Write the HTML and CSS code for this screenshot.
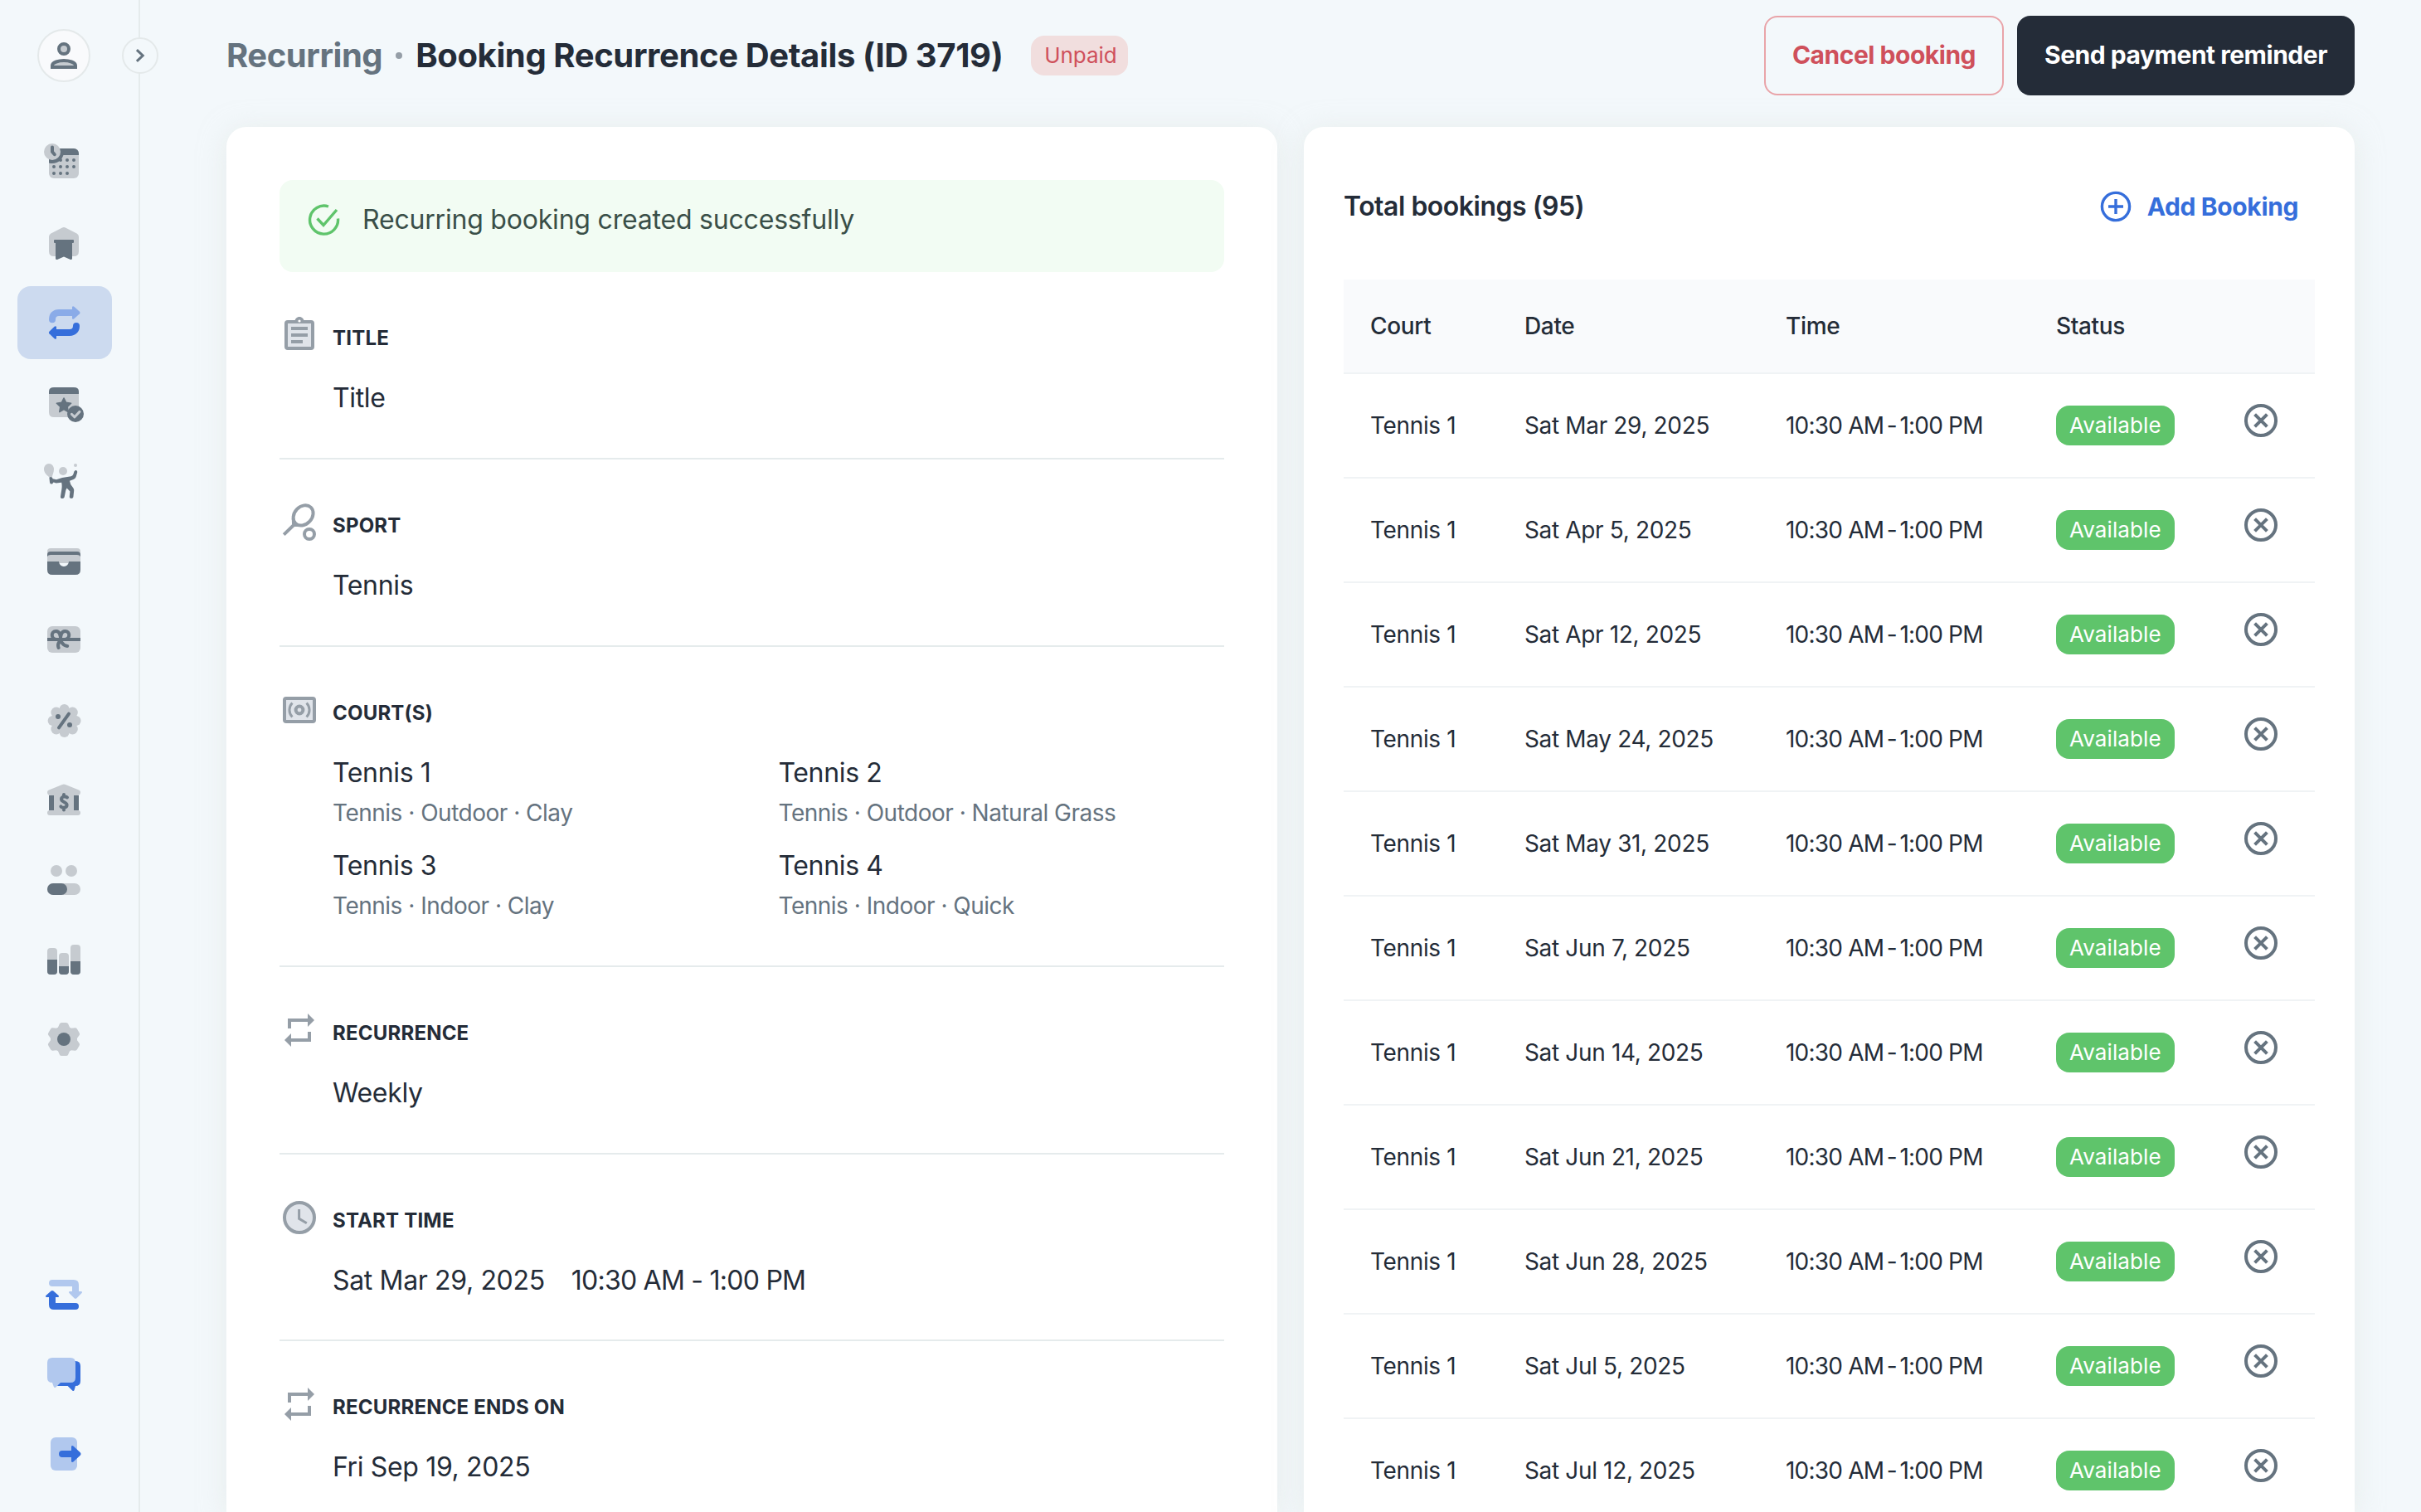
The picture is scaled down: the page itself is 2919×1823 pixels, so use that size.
FILE: index.html
```html
<!DOCTYPE html>
<html lang="en">
<head>
    <meta charset="UTF-8">
    <meta name="viewport" content="width=device-width, initial-scale=1.0">
    <title>Booking Recurrence Details</title>
    <link rel="stylesheet" href="styles.css">
</head>
<body>
    <aside class="sidebar">
        <div class="avatar">
            <svg class="icon" viewBox="0 0 24 24">
                <circle class="soft" cx="12" cy="8" r="3"/>
                <path class="soft" d="M5 19v-1c0-2 4-3 7-3s7 1 7 3v1z"/>
                <circle class="line" cx="12" cy="8" r="3"/>
                <path class="line" d="M5 19v-1c0-2 4-3 7-3s7 1 7 3v1z"/>
            </svg>
        </div>
        <button class="toggle">
            <svg viewBox="0 0 44 44"><path d="M17.5 14.5l8 7.5-8 7.5"/></svg>
        </button>

        <nav class="nav">
            <!-- Calendar -->
            <a class="nav-item">
                <svg class="icon" viewBox="0 0 24 24">
                    <clipPath id="cal"><rect x="3" y="3" width="18" height="18" rx="3"/></clipPath>
                    <g clip-path="url(#cal)">
                        <path class="soft" d="M3 3h18v18H3z"/>
                        <path class="dark" d="M3 3h18v4H3z"/>
                        <circle class="dark" cx="5" cy="5" r="7"/>
                    </g>
                    <circle class="soft" cx="5" cy="5" r="5"/>
                    <path class="line round" d="M5 2.300V5l1.400 1.600"/>
                    <path class="dots" d="M10 10h0M14 10h0M18 10h0M6 14h0M10 14h0M14 14h0M18 14h0M6 18h0M10 18h0M14 18h0"/>
                </svg>
            </a>
            <!-- Club -->
            <a class="nav-item">
                <svg class="icon" viewBox="0 0 24 24">
                    <path class="soft" d="M10.800 2.900q1.200-.8 2.400 0l6.600 3.300q1.200.7 1.200 2V17q0 3-3 3H6q-3 0-3-3V8.200q0-1.300 1.200-2z"/>
                    <path class="dark" d="M6.500 10h11q.5 0 .5.500v1q0 .5-.5.500H17v9.200q0 1-1 .8l-4-1.700L8 22q-1 .2-1-.8V12h-.5q-.5 0-.5-.5v-1q0-.5.5-.5z"/>
                </svg>
            </a>
            <!-- Recurring -->
            <a class="nav-item active">
                <svg class="icon" viewBox="0 0 24 24">
                    <path d="M5 10.100C5 7.500 6.500 6 9 6h8.500" fill="none" stroke="#8aabe8" stroke-width="4" stroke-linecap="round"/>
                    <path d="M17 2.500q.4-.8 1.200-.1l3.300 3q.6.600 0 1.200l-3.300 3q-.8.700-1.200-.1z" fill="#8aabe8"/>
                    <path d="M19.500 14c0 2.400-1.500 4-4 4H7" fill="none" stroke="#356edb" stroke-width="4" stroke-linecap="round"/>
                    <path class="blue" d="M7.500 14.500q-.4-.8-1.200-.1L3.200 17.400q-.6.600 0 1.200l3.100 3q.8.700 1.200-.1z"/>
                </svg>
            </a>
            <!-- Events -->
            <a class="nav-item">
                <svg class="icon" viewBox="0 0 24 24">
                    <path class="soft" d="M3 6h18v12q0 3-3 3H6q-3 0-3-3z"/>
                    <path class="dark" d="M3 7V5.500Q3 3 6 3h12q3 0 3 2.500V7z"/>
                    <path class="dark" d="M12 9.500l1.300 2.700 3 .4-2.200 2.100.5 3.100L12 16.300l-2.600 1.500.5-3.100-2.200-2.100 3-.4z" stroke="#65737f" stroke-width=".8" stroke-linejoin="round"/>
                    <circle class="dark" cx="19" cy="19" r="5"/>
                    <path d="M16.700 19.200l1.800 1.700 3-3.200" fill="none" stroke="#c6cbd0" stroke-width="1.500" stroke-linecap="round" stroke-linejoin="round"/>
                </svg>
            </a>
            <!-- Coaching -->
            <a class="nav-item">
                <svg class="icon" viewBox="0 0 24 24">
                    <path class="soft" d="M3 1C1.200 1 0 2.600 0 4.300 0 6.500 1.700 8 3 9h2c0-1.200 1-2.600 1-4.700C6 2.600 4.800 1 3 1z"/>
                    <circle class="soft" cx="11.500" cy="5.500" r="2.500"/>
                    <circle class="soft" cx="19" cy="2" r="1"/>
                    <path class="dark" d="M3.200 9.200q.8-.5 1.700 0l.4.900 2.200.5 3.500-1.100 5.400-.9q1-.2 1.300-1.200l.5-1.600q.4-1 1.200-.8.900.3.700 1.300l-.8 2.700q-.3 1.100-1.500 1.500l-2.300.9.600 2.100 1.600 2.200q.5.700.4 1.500l-.4 3.900q-.2.900-1.100.9-1.400 0-1.200-1.200l.3-3.100-1.900-1.900q-.7 1-.9 2.600l-.6 2.900q-.2.700-1.100.7-1.400 0-1.200-1.300l.7-4.400q.2-1.300.1-2.500l-.2-1.400-3.300.4-1.500-.6-.8 1q-1.500.4-1.500-.9z"/>
                </svg>
            </a>
            <!-- Wallet -->
            <a class="nav-item">
                <svg class="icon" viewBox="0 0 24 24">
                    <path class="soft" d="M4 4h16q2 0 2 2v7H2V6q0-2 2-2z"/>
                    <path class="dark" d="M2 9V8q0-2 2-2h16q2 0 2 2v1q-.5-1-2-1H4Q2.500 8 2 9z"/>
                    <path class="dark" d="M2 12h7a3 3 0 0 0 6 0h7v5q0 3-3 3H5q-3 0-3-3z"/>
                </svg>
            </a>
            <!-- Gift cards -->
            <a class="nav-item">
                <svg class="icon" viewBox="0 0 24 24">
                    <rect class="soft" x="2" y="3" width="20" height="16" rx="3"/>
                    <path class="dark" d="M2 10h20v2H2z"/>
                    <path class="line round" d="M10 11H7.500C3.800 10.500 4.300 6 7.200 6 9 6 10 7.600 10 11c0-3.400 1-5 2.800-5 2.900 0 3.400 4.500-.3 5zM10 11.500c-1.500 1.500-1.800 3-1.200 4.500M10.500 12.500c.9 1.600 2 2.200 3.600 2.500"/>
                </svg>
            </a>
            <!-- Discounts -->
            <a class="nav-item">
                <svg class="icon" viewBox="0 0 24 24">
                    <g class="soft">
                        <circle cx="12.300" cy="12" r="8"/>
                        <circle cx="12.300" cy="5" r="3"/><circle cx="17.200" cy="7" r="3.200"/>
                        <circle cx="19.300" cy="12" r="3"/><circle cx="17.200" cy="17" r="3.200"/>
                        <circle cx="12.300" cy="19" r="3"/><circle cx="7.400" cy="17" r="3.200"/>
                        <circle cx="5.300" cy="12" r="3"/><circle cx="7.400" cy="7" r="3.200"/>
                    </g>
                    <circle class="dark" cx="8.500" cy="9.500" r="1.500"/>
                    <circle class="dark" cx="15.500" cy="14.500" r="1.500"/>
                    <path class="line round" d="M15 7.800l-6 8.400"/>
                </svg>
            </a>
            <!-- Finances -->
            <a class="nav-item">
                <svg class="icon" viewBox="0 0 24 24">
                    <path class="soft" d="M11 2.500q1-.5 2 0l8 3.200q1 .4 1 1.300 0 2-2 2h-2v9h2.500q1.500 0 1.500 1.500T20.500 21h-17Q2 21 2 19.500T3.500 18H6V9H4Q2 9 2 7q0-.9 1-1.300z"/>
                    <path class="dark" d="M3 9h3v9H3zM18 9h3v9h-3z"/>
                    <path class="line" stroke-linecap="round" d="M14 10.200c-.8-.7-3.500-.7-3.500 1.100 0 1.900 3.300 1.500 3.300 3.500 0 1.900-2.800 1.900-3.600.9M12 8.500v1.200M12 16.500v1.200"/>
                </svg>
            </a>
            <!-- Users -->
            <a class="nav-item">
                <svg class="icon" viewBox="0 0 24 24">
                    <circle class="soft" cx="7.500" cy="6.500" r="3.500"/>
                    <circle class="soft" cx="16.500" cy="6.500" r="3.500"/>
                    <rect class="soft" x="2" y="14" width="20" height="7" rx="3.500"/>
                    <rect class="dark" x="2" y="14" width="12" height="7" rx="3.500"/>
                </svg>
            </a>
            <!-- Reports -->
            <a class="nav-item">
                <svg class="icon" viewBox="0 0 24 24">
                    <rect class="soft" x="2" y="5" width="6" height="16" rx="2"/>
                    <rect class="soft" x="9" y="8" width="6" height="13" rx="2"/>
                    <rect class="soft" x="16" y="3" width="6" height="18" rx="2"/>
                    <path class="dark" d="M2 12h6v7q0 2-2 2H4q-2 0-2-2zM9 16h6v3q0 2-2 2h-2q-2 0-2-2zM16 13h6v6q0 2-2 2h-2q-2 0-2-2z"/>
                </svg>
            </a>
            <!-- Settings -->
            <a class="nav-item">
                <svg class="icon" viewBox="0 0 24 24">
                    <g class="soft">
                        <circle cx="12" cy="12" r="8"/>
                        <path id="cog" d="M10.700 2h2.600q1 0 1.300.8L16 6v12l-1.400 3.200q-.3.800-1.300.8h-2.600q-1 0-1.300-.8L8 18V6l1.400-3.200q.3-.8 1.300-.8z"/>
                        <use href="#cog" transform="rotate(60 12 12)"/>
                        <use href="#cog" transform="rotate(120 12 12)"/>
                    </g>
                    <circle class="dark" cx="12" cy="12" r="4"/>
                </svg>
            </a>
        </nav>

        <nav class="nav nav-bottom">
            <a class="nav-item">
                <svg class="icon" viewBox="0 0 24 24">
                    <path class="sky" d="M5 3h13q3 0 3 3v4h1.300q1.200.2.500 1l-3.100 3.100q-.7.600-1.400 0L15.200 11q-.7-.8.500-1H17V7H5q-2 0-2-2t2-2z"/>
                    <path class="blue" d="M19 21H6q-3 0-3-3v-4.500H1.700q-1.200-.2-.5-1l3.100-2.700q.7-.6 1.400 0l3.100 2.700q.7.800-.5 1H7V17h12q2 0 2 2t-2 2z"/>
                </svg>
            </a>
            <a class="nav-item">
                <svg class="icon" viewBox="0 0 24 24">
                    <path class="blue" d="M8 19l3-8 5-7h3q3 0 3 3v9q0 3-3 3l-.7 2.500q-.4.900-1.200.2L14.300 19z"/>
                    <path class="sky" d="M5 2h11q3 0 3 3v9q0 3-3 3h-6l-2.800 2.700q-.9.700-1.300-.2L5 17q-3 0-3-3V5q0-3 3-3z"/>
                </svg>
            </a>
            <a class="nav-item">
                <svg class="icon" viewBox="0 0 24 24">
                    <rect class="sky" x="4" y="2" width="16" height="20" rx="3"/>
                    <path class="blue" d="M11 10h5.500V7.600q.2-1 1.200-.4l4.300 4.100q.6.700 0 1.400l-4.300 4.100q-1 .6-1.200-.4V14H11q-2 0-2-2t2-2z"/>
                </svg>
            </a>
        </nav>
    </aside>

    <main class="main">
        <header class="header">
            <h1 class="title"><span class="crumb">Recurring</span><span class="sep"></span>Booking Recurrence Details (ID 3719)</h1>
            <span class="badge badge-unpaid">Unpaid</span>
            <div class="actions">
                <button class="btn btn-cancel">Cancel booking</button>
                <button class="btn btn-dark">Send payment reminder</button>
            </div>
        </header>

        <div class="columns">
            <section class="card details">
                <div class="alert">
                    <svg class="alert-icon" viewBox="0 0 40 40">
                        <path d="M25 4A17 17 0 1 0 36.500 18.500"/>
                        <path d="M11.500 18.500l7.500 8L35 8"/>
                    </svg>
                    Recurring booking created successfully
                </div>

                <div class="detail">
                    <svg class="icon" viewBox="0 0 24 24">
                        <path class="fill" d="M4 4h16v16H4z"/>
                        <rect class="stroke" x="4" y="4" width="16" height="16" rx="1"/>
                        <path class="solid" d="M9 4c.3-1.700 1.400-3 3-3s2.700 1.300 3 3z"/>
                        <circle cx="12" cy="3.500" r=".8" fill="#fff"/>
                        <path class="solid" d="M7 7h10v2H7zM7 11h10v2H7zM7 15h7v2H7z"/>
                    </svg>
                    <div class="detail-body">
                        <h2>TITLE</h2>
                        <p>Title</p>
                    </div>
                </div>

                <div class="detail">
                    <svg class="icon" viewBox="0 0 24 24">
                        <ellipse class="stroke" cx="14.300" cy="7.700" rx="6.700" ry="5.300" transform="rotate(-47 14.300 7.700)"/>
                        <path class="stroke" d="M2.600 19.300L9.500 12.600"/>
                        <path class="solid" d="M7.400 9.500l5.300 5-3.500 0-1.700-1.500z"/>
                        <circle class="stroke" cx="18" cy="19" r="3"/>
                    </svg>
                    <div class="detail-body">
                        <h2>SPORT</h2>
                        <p>Tennis</p>
                    </div>
                </div>

                <div class="detail">
                    <svg class="icon" viewBox="0 0 24 24">
                        <path class="fill" d="M3 5h18v14H3z"/>
                        <rect class="stroke" x="3" y="5" width="18" height="14" rx="1"/>
                        <circle class="stroke" cx="12" cy="12" r="2.200"/>
                        <path class="thin" d="M7.700 7.700c-2.300 2.500-2.300 6.100 0 8.600M16.300 7.700c2.300 2.500 2.300 6.100 0 8.600"/>
                    </svg>
                    <div class="detail-body">
                        <h2>COURT(S)</h2>
                        <div class="courts">
                            <div><p>Tennis 1</p><small>Tennis · Outdoor · Clay</small></div>
                            <div><p>Tennis 2</p><small>Tennis · Outdoor · Natural Grass</small></div>
                            <div><p>Tennis 3</p><small>Tennis · Indoor · Clay</small></div>
                            <div><p>Tennis 4</p><small>Tennis · Indoor · Quick</small></div>
                        </div>
                    </div>
                </div>

                <div class="detail">
                    <svg class="icon" viewBox="0 0 24 24"><path id="repeat" class="solid" d="M7 7h10v3l4-4-4-4v3H5v6h2V7zm10 10H7v-3l-4 4 4 4v-3h12v-6h-2v4z"/></svg>
                    <div class="detail-body">
                        <h2>RECURRENCE</h2>
                        <p>Weekly</p>
                    </div>
                </div>

                <div class="detail detail-time">
                    <svg class="icon" viewBox="0 0 24 24">
                        <circle class="fill" cx="12" cy="12" r="9"/>
                        <circle class="stroke" cx="12" cy="12" r="9"/>
                        <path class="thin" d="M11.800 7v5.700l4.600 2.700"/>
                    </svg>
                    <div class="detail-body">
                        <h2>START TIME</h2>
                        <p><span class="date">Sat Mar 29, 2025</span><span class="hours">10:30 AM - 1:00 PM</span></p>
                    </div>
                </div>

                <div class="detail">
                    <svg class="icon" viewBox="0 0 24 24"><use href="#repeat"/></svg>
                    <div class="detail-body">
                        <h2>RECURRENCE ENDS ON</h2>
                        <p>Fri Sep 19, 2025</p>
                    </div>
                </div>
            </section>

            <section class="card bookings">
                <div class="bookings-head">
                    <h2>Total bookings (95)</h2>
                    <button class="add">
                        <svg class="icon" viewBox="0 0 24 24">
                            <circle cx="12" cy="12" r="8.300"/>
                            <path d="M12 7.500v9M7.500 12h9"/>
                        </svg>
                        Add Booking
                    </button>
                </div>
                <table class="table">
                    <thead>
                        <tr>
                            <th class="col-court">Court</th>
                            <th class="col-date">Date</th>
                            <th class="col-time">Time</th>
                            <th class="col-status">Status</th>
                            <th></th>
                        </tr>
                    </thead>
                    <tbody id="rows"></tbody>
                </table>
            </section>
        </div>
    </main>

    <script>
        const dates = ['Mar 29', 'Apr 5', 'Apr 12', 'May 24', 'May 31', 'Jun 7', 'Jun 14', 'Jun 21', 'Jun 28', 'Jul 5', 'Jul 12'];

        document.getElementById('rows').innerHTML = dates.map(date => `
            <tr>
                <td>Tennis 1</td>
                <td>Sat ${date}, 2025</td>
                <td class="time">10:30 AM<span class="dash"> - </span>1:00 PM</td>
                <td><span class="badge badge-available">Available</span></td>
                <td class="remove">
                    <svg class="icon" viewBox="0 0 24 24"><circle cx="12" cy="12" r="9"/><path d="M8.300 8.300l7.400 7.400M15.700 8.300l-7.400 7.400"/></svg>
                </td>
            </tr>`).join('');
    </script>
</body>
</html>
```
FILE: styles.css
```css
* {
    box-sizing: border-box;
}
body {
    display: flex;
    height: 1823px;
    margin: 0;
    overflow: hidden;
    background: #f3f8fb;
    color: #242c38;
    font-family: Inter, "Liberation Sans", sans-serif;
    font-size: 28px;
}
h1, h2, p {
    margin: 0;
}
button {
    border: none;
    background: none;
    font-family: inherit;
    cursor: pointer;
}
.icon {
    display: block;
    flex: none;
    width: 48px;
    height: 48px;
    overflow: visible;
}

/* Sidebar */
.sidebar {
    position: relative;
    display: flex;
    flex-direction: column;
    flex: none;
    width: 169px;
    padding: 35px 0 26px 21px;
    border-right: 2px solid #e5ebec;
}
.avatar {
    width: 64px;
    height: 64px;
    margin-left: 24px;
    padding: 6px;
    border: 2px solid #e4e9ea;
    border-radius: 50%;
    background: #f9fafc;
}
.toggle {
    position: absolute;
    top: 45px;
    right: -24px;
    width: 44px;
    height: 44px;
    padding: 0;
    border: 2px solid #e4e9ea;
    border-radius: 50%;
    background: #f3f8fb;
}
.toggle svg {
    display: block;
    width: 40px;
    height: 40px;
    fill: none;
    stroke: #65737f;
    stroke-width: 3.3;
}
.nav {
    display: flex;
    flex-direction: column;
    gap: 8px;
    margin-top: 54px;
}
.nav-bottom {
    margin-top: auto;
}
.nav-item {
    width: 114px;
    height: 88px;
    padding: 20px 32px;
    border-radius: 16px;
}
.nav-item.active {
    background: #ccdaef;
}
.soft {
    fill: #c6cbd0;
}
.dark {
    fill: #65737f;
}
.blue {
    fill: #356edb;
}
.sky {
    fill: #b1c8ee;
}
.line {
    fill: none;
    stroke: #65737f;
    stroke-width: 2;
}
.round {
    stroke-linecap: round;
    stroke-linejoin: round;
}
.dots {
    stroke: #65737f;
    stroke-width: 2;
    stroke-linecap: round;
}

/* Header */
.main {
    display: flex;
    flex: 1;
    flex-direction: column;
    padding: 19px 80px 0 104px;
}
.header {
    display: flex;
    flex: none;
    align-items: center;
    height: 96px;
    margin-bottom: 38px;
}
.title {
    display: flex;
    align-items: center;
    padding-bottom: 1px;
    font-size: 40px;
    font-weight: 700;
    letter-spacing: -0.38px;
    white-space: nowrap;
}
.crumb {
    letter-spacing: -0.45px;
    color: #65737f;
}
.sep {
    width: 8px;
    height: 8px;
    margin: 0 16px 0 16px;
    border-radius: 50%;
    background: #959ea7;
}
.badge {
    display: inline-block;
    height: 48px;
    padding: 0 16px;
    border-radius: 16px;
    font-size: 26px;
    line-height: 48px;
}
.badge-unpaid {
    width: 117px;
    margin-left: 34px;
    background: #f1dede;
    color: #cf505b;
    letter-spacing: -0.1px;
}
.actions {
    display: flex;
    gap: 16px;
    margin-left: auto;
}
.btn {
    height: 96px;
    padding: 0 0 2px;
    border-radius: 16px;
    font-size: 30px;
    font-weight: 700;
    letter-spacing: -0.48px;
}
.btn-cancel {
    width: 289px;
    border: 2px solid #e9a4a9;
    color: #cf505b;
}
.btn-dark {
    width: 407px;
    background: #242c38;
    color: #fff;
}

/* Cards */
.columns {
    display: grid;
    flex: 1;
    grid-template-columns: 1fr 1fr;
    gap: 32px;
    min-height: 0;
}
.card {
    min-height: 0;
    overflow: hidden;
    border-radius: 24px 24px 0 0;
    background: #fff;
    box-shadow: 0 4px 32px rgba(220, 226, 222, 0.5);
}
.details {
    padding: 64px 64px 0;
}
.alert {
    display: flex;
    gap: 26px;
    height: 111px;
    padding: 24px 34px;
    border-radius: 16px;
    background: #f2fcf3;
    color: #3a4f48;
    font-size: 32px;
    line-height: 47px;
    letter-spacing: -0.2px;
}
.alert-icon {
    width: 40px;
    height: 40px;
    margin-top: 4px;
    fill: none;
    stroke: #5fc46b;
    stroke-width: 3.4;
}
.detail {
    display: flex;
    gap: 16px;
    padding: 52px 0 48px;
    border-bottom: 2px solid #e5ebec;
}
.detail-time {
    padding-bottom: 47px;
}
.detail-body {
    flex: 1;
    padding-top: 13px;
}
.detail h2 {
    margin-bottom: 33px;
    font-size: 24px;
    font-weight: 700;
    line-height: 30px;
    letter-spacing: 0.2px;
}
.detail p {
    font-size: 32px;
    line-height: 48px;
    letter-spacing: -0.35px;
}
.detail .hours {
    margin-left: 32px;
    letter-spacing: -0.75px;
}
.courts {
    display: grid;
    grid-template-columns: 1fr 1fr;
    row-gap: 18px;
    padding-bottom: 2px;
}
.courts small {
    display: block;
    margin-top: 2px;
    color: #65737f;
    font-size: 28px;
    line-height: 44px;
    letter-spacing: -0.5px;
}
.fill {
    fill: #e0e4ea;
}
.stroke, .thin {
    fill: none;
    stroke: #959ea7;
    stroke-width: 2;
}
.thin {
    stroke-width: 1.5;
}
.solid {
    fill: #959ea7;
}

/* Bookings table */
.bookings {
    padding: 64px 48px 0;
}
.bookings-head {
    display: flex;
    align-items: center;
    justify-content: space-between;
    height: 64px;
    margin-bottom: 56px;
    padding-right: 20px;
}
.bookings-head h2 {
    padding-bottom: 1px;
    font-size: 32px;
    font-weight: 600;
    letter-spacing: -0.5px;
}
.add {
    display: flex;
    align-items: center;
    gap: 14px;
    padding: 0 0 1px;
    color: #356edb;
    font-size: 30px;
    font-weight: 700;
    letter-spacing: -0.38px;
}
.add .icon {
    fill: none;
    stroke: #356edb;
    stroke-width: 1.7;
}
.table {
    width: 1171px;
    border-collapse: separate;
    border-spacing: 0;
    table-layout: fixed;
}
.table th, .table td {
    padding: 0 0 0 32px;
    border-bottom: 2px solid #f0f3f5;
    text-align: left;
    letter-spacing: -0.35px;
}
.table th {
    height: 114px;
    background: #f9fafc;
    font-weight: 500;
}
.table td {
    height: 126px;
}
.col-court {
    width: 186px;
}
.col-date {
    width: 315px;
}
.col-time {
    width: 326px;
}
.col-status {
    width: 227px;
}
.table .time {
    letter-spacing: -0.8px;
}
.dash {
    word-spacing: -3.5px;
}
.badge-available {
    background: #5fc46b;
    color: #fff;
    letter-spacing: 0.1px;
    vertical-align: middle;
}
.table .remove {
    padding: 0 0 12px 28px;
}
.remove .icon {
    fill: none;
    stroke: #65737f;
    stroke-width: 2;
}
```
